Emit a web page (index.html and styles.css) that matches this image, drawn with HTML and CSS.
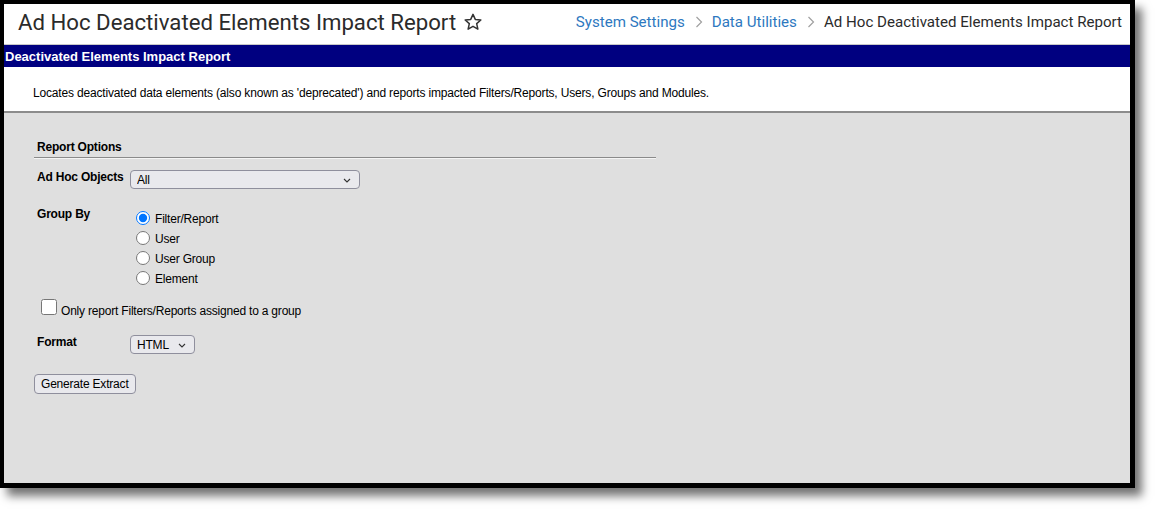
FILE: index.html
```html
<!DOCTYPE html>
<html>
<head>
<meta charset="utf-8">
<link rel="stylesheet" href="styles.css">
</head>
<body>
<div class="frame">
  <header class="topbar">
    <div class="title">
      <h1>Ad Hoc Deactivated Elements Impact Report</h1>
      <svg class="star" width="20" height="20" viewBox="0 0 24 24"><path d="M12 2.8l2.75 6.1 6.65.65-5 4.45 1.45 6.55L12 17.2l-5.85 3.35 1.45-6.55-5-4.45 6.65-.65z" fill="none" stroke="#333" stroke-width="1.8" stroke-linejoin="round"/></svg>
    </div>
    <nav class="crumbs">
      <a class="crumb-link">System Settings</a>
      <span class="sep"><svg width="8" height="12" viewBox="0 0 8 12"><path d="M1.5 1l5 5-5 5" fill="none" stroke="#a0a0a0" stroke-width="1.2"/></svg></span>
      <a class="crumb-link">Data Utilities</a>
      <span class="sep"><svg width="8" height="12" viewBox="0 0 8 12"><path d="M1.5 1l5 5-5 5" fill="none" stroke="#a0a0a0" stroke-width="1.2"/></svg></span>
      <span class="crumb-current">Ad Hoc Deactivated Elements Impact Report</span>
    </nav>
  </header>
  <div class="banner">Deactivated Elements Impact Report</div>
  <div class="desc">Locates deactivated data elements (also known as 'deprecated') and reports impacted Filters/Reports, Users, Groups and Modules.</div>
  <main class="content">
    <div class="section">
      <div class="section-title">Report Options</div>
      <div class="row row-objects">
        <span class="label">Ad Hoc Objects</span>
        <span class="sel-wrap sel-wide">
          <select class="sel"><option>All</option></select>
          <svg class="chev" width="8" height="5" viewBox="0 0 8 5"><path d="M1 1l3 3 3-3" fill="none" stroke="#333" stroke-width="1.1"/></svg>
        </span>
      </div>
      <div class="row row-group">
        <span class="label">Group By</span>
        <div class="radios">
          <label class="radio"><input type="radio" name="g" checked><span>Filter/Report</span></label>
          <label class="radio"><input type="radio" name="g"><span>User</span></label>
          <label class="radio"><input type="radio" name="g"><span>User Group</span></label>
          <label class="radio"><input type="radio" name="g"><span>Element</span></label>
        </div>
      </div>
      <label class="check"><input type="checkbox"><span>Only report Filters/Reports assigned to a group</span></label>
      <div class="row row-format">
        <span class="label">Format</span>
        <span class="sel-wrap sel-small">
          <select class="sel"><option>HTML</option></select>
          <svg class="chev" width="8" height="5" viewBox="0 0 8 5"><path d="M1 1l3 3 3-3" fill="none" stroke="#333" stroke-width="1.1"/></svg>
        </span>
      </div>
      <button class="btn">Generate Extract</button>
    </div>
  </main>
</div>
</body>
</html>
```

FILE: styles.css
```css
html, body {
  margin: 0;
  padding: 0;
  background: #ffffff;
}
body {
  width: 1160px;
  height: 513px;
  overflow: hidden;
  font-family: Arial, "Liberation Sans", sans-serif;
}
.frame {
  width: 1135px;
  height: 488px;
  box-sizing: border-box;
  border-style: solid;
  border-color: #000;
  border-width: 4px 5px 5px 4px;
  box-shadow: 7px 8px 9px rgba(0, 0, 0, 0.55);
  display: flex;
  flex-direction: column;
  background: #dfdfdf;
}
.topbar {
  height: 41px;
  box-sizing: border-box;
  background: #fff;
  border-bottom: 1px solid #c8c8c8;
  display: flex;
  align-items: center;
  justify-content: space-between;
  padding: 0 8px 4px 14px;
  flex-shrink: 0;
}
.title {
  display: flex;
  align-items: center;
  gap: 7px;
}
.title h1 {
  margin: 0;
  font-family: Roboto, "Liberation Sans", sans-serif;
  font-weight: 400;
  font-size: 22.2px;
  color: #2b2b2b;
}
.star {
  display: block;
  margin-top: -1px;
}
.crumbs {
  display: flex;
  align-items: center;
  font-family: Roboto, "Liberation Sans", sans-serif;
  font-size: 15.1px;
}
.crumb-link {
  color: #2d78c0;
}
.sep {
  display: flex;
  align-items: center;
  margin: 0 9px 0 10px;
}
.crumb-current {
  color: #2b2b2b;
}
.banner {
  height: 22px;
  background: #000080;
  color: #fff;
  font-weight: bold;
  font-size: 13px;
  line-height: 23px;
  padding-left: 1px;
  flex-shrink: 0;
}
.desc {
  background: #fff;
  border-bottom: 2px solid #8c8c8c;
  box-sizing: border-box;
  height: 46px;
  font-size: 12px;
  letter-spacing: -0.17px;
  color: #000;
  padding: 19px 0 0 29px;
  flex-shrink: 0;
}
.content {
  flex: 1;
  background: #dfdfdf;
  padding: 27px 0 0 30px;
}
.section {
  display: flex;
  flex-direction: column;
  font-size: 12px;
  letter-spacing: -0.2px;
  color: #000;
}
.section-title {
  width: 619px;
  font-weight: bold;
  padding: 0 0 3px 3px;
  border-bottom: 1px solid #8a8a8a;
  box-shadow: 0 1px 0 #f4f4f4;
}
.row {
  display: flex;
  align-items: flex-start;
}
.label {
  width: 93px;
  padding-left: 3px;
  font-weight: bold;
  flex-shrink: 0;
}
.row-objects {
  margin-top: 12px;
}
.sel-wrap {
  position: relative;
  display: block;
  height: 19px;
}
.sel {
  display: block;
  width: 100%;
  height: 19px;
  box-sizing: border-box;
  appearance: none;
  -webkit-appearance: none;
  font-family: Arial, "Liberation Sans", sans-serif;
  font-size: 12px;
  letter-spacing: -0.2px;
  margin: 0;
  padding: 1px 0 0 6px;
  border: 1px solid #8f8f9d;
  border-radius: 4px;
  background: #e9e9ed;
  color: #000;
}
.chev {
  position: absolute;
  right: 9px;
  top: 8px;
}
.sel-wide {
  width: 230px;
}
.row-group {
  margin-top: 18px;
}
.radios {
  display: flex;
  flex-direction: column;
  gap: 6px;
  margin-left: 6px;
  margin-top: 4px;
}
.radio {
  display: flex;
  align-items: center;
  gap: 5px;
  height: 14px;
}
.radio span {
  padding-top: 1px;
}
.radio input {
  width: 14px;
  height: 14px;
  margin: 0;
}
.check {
  display: flex;
  align-items: flex-end;
  gap: 4px;
  margin: 14px 0 0 7px;
  line-height: 14px;
}
.check input {
  width: 16px;
  height: 16px;
  margin: 0;
}
.check span {
  position: relative;
  top: 3px;
}
.row-format {
  margin-top: 20px;
}
.sel-small {
  width: 65px;
}
.btn {
  align-self: flex-start;
  margin-top: 20px;
  font-family: Arial, "Liberation Sans", sans-serif;
  font-size: 12px;
  letter-spacing: -0.2px;
  height: 20px;
  padding: 0 6px;
  border: 1px solid #8f8f9d;
  border-radius: 4px;
  background: #e9e9ed;
  color: #000;
}
```
